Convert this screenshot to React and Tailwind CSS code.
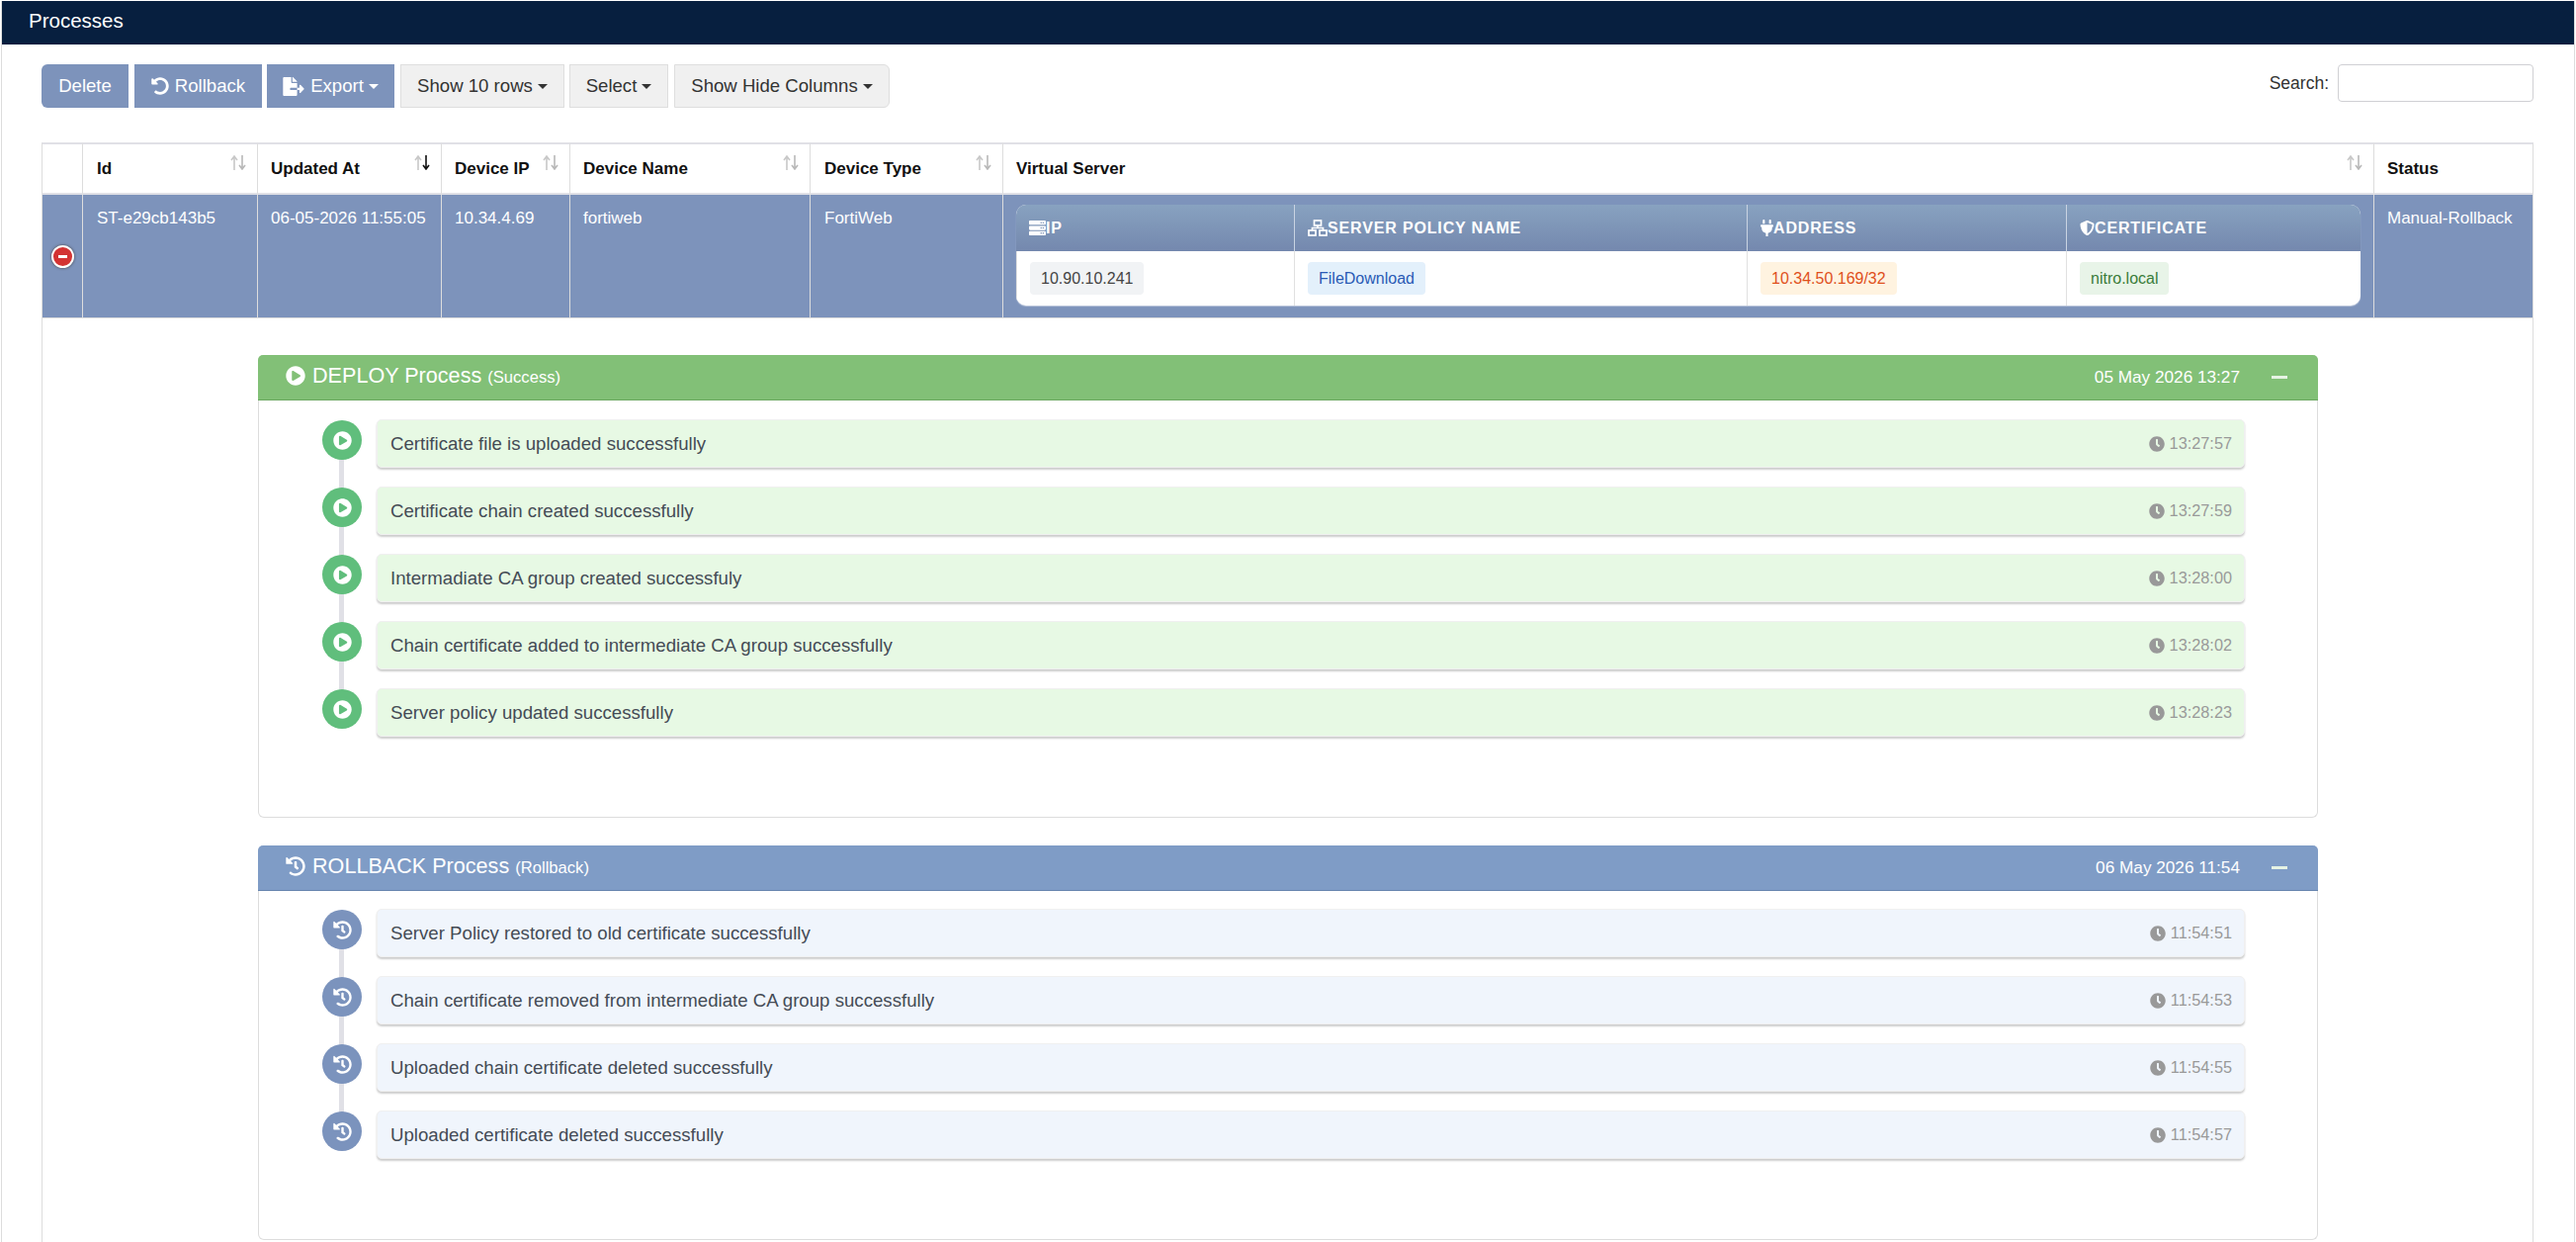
import React from "react";
import { FaUndoAlt, FaFileExport, FaServer, FaPlug, FaShieldAlt, FaPlayCircle, FaHistory, FaClock } from "react-icons/fa";

function Caret({ dark }) {
  return <span className={"ml-[5px] inline-block h-0 w-0 border-x-[5px] border-t-[5px] border-x-transparent " + (dark ? "border-t-[#333333]" : "border-t-white")} />;
}

function SortIcon({ active }) {
  return (
    <svg className="absolute right-[11px] top-[11px]" width="16" height="15" viewBox="0 0 16 15" fill="none" strokeWidth="1.6">
      <path d="M4 15V2M1 5l3-4 3 4" stroke="#c8c8c8" />
      <path d="M12 0v13M9 10l3 4 3-4" stroke={active ? "#111111" : "#b8b8b8"} />
    </svg>
  );
}

function NetIcon() {
  return (
    <svg width="20" height="17" viewBox="0 0 20 17" fill="none" stroke="white" strokeWidth="1.7" className="shrink-0">
      <rect x="6.5" y="1" width="7" height="5" />
      <rect x="1" y="11" width="7" height="5" />
      <rect x="12" y="11" width="7" height="5" />
      <path d="M10 6v2.5M4.5 11V8.5h11V11" />
    </svg>
  );
}

const cols = [
  { label: "", w: "w-[42px]", pad: "pl-[13px]" },
  { label: "Id", w: "w-[177px]", pad: "pl-[14px]" },
  { label: "Updated At", w: "w-[186px]", active: true, pad: "pl-[13px]" },
  { label: "Device IP", w: "w-[130px]", pad: "pl-[13px]" },
  { label: "Device Name", w: "w-[243px]", pad: "pl-[13px]" },
  { label: "Device Type", w: "w-[195px]", pad: "pl-[14px]" },
  { label: "Virtual Server", w: "w-[1387px]", pad: "pl-[13px]" },
  { label: "Status", w: "w-[161px]", nosort: true, pad: "pl-[13px]" },
];

const rowCells = [
  ["ST-e29cb143b5", "pl-[14px]"],
  ["06-05-2026 11:55:05", "pl-[13px]"],
  ["10.34.4.69", "pl-[13px]"],
  ["fortiweb", "pl-[13px]"],
  ["FortiWeb", "pl-[14px]"],
];

function Step({ text, time, last, green, Icon }) {
  return (
    <div className="relative flex items-start gap-[15px]">
      {!last && <div className={"absolute left-[17px] top-[40px] h-[30px] w-[5px] bg-[#e0e0e6]"} />}
      <div className={"relative mt-px flex h-[40px] w-[40px] shrink-0 items-center justify-center rounded-full text-white " + (green ? "bg-[#60be7c]" : "bg-[#7b93bd]")}>
        <Icon className="h-[19px] w-[19px]" />
      </div>
      <div className={"flex h-[49px] flex-1 items-center justify-between rounded-[5px] border border-[#f0f0f0] pl-[13px] pr-[12px] shadow-[0_2px_2px_rgba(0,0,0,0.2)] " + (green ? "bg-[#e7f9e4]" : "bg-[#f0f5fc]")}>
        <span className="text-[18.65px] text-[#444b55]">{text}</span>
        <span className="flex items-center gap-[5px] text-[16.3px] text-[#999999]">
          <FaClock className="h-[16px] w-[16px]" />
          {time}
        </span>
      </div>
    </div>
  );
}

function Card({ green, title, sub, date, steps, Icon, className, bodyTop }) {
  return (
    <section className={"rounded-[6px] border border-[#dddddd] border-t-0 " + className}>
      <header className={"-mx-px flex h-[46px] items-center justify-between rounded-t-[5px] border-b pl-[28px] pr-[31px] text-white " + (green ? "border-[#6ba861] bg-[#82c077]" : "border-[#6684ae] bg-[#7f9cc6]")}>
        <div className="-mt-[2px] flex items-center">
          <Icon className="mr-[7px] h-[20px] w-[20px]" />
          <span className="text-[21.6px]">{title}</span>
          <span className="ml-[6px] mt-[3px] text-[16.6px]">{sub}</span>
        </div>
        <div className="flex items-center">
          <span className="text-[17.2px]">{date}</span>
          <span className="ml-[32px] h-[3px] w-[16px] bg-[#e6f3e4]" />
        </div>
      </header>
      <div className={"flex flex-col gap-[19px] pb-[81px] pl-[64px] pr-[73px] " + bodyTop}>
        {steps.map((s, i) => (
          <Step key={s[0]} text={s[0]} time={s[1]} green={green} Icon={Icon} last={i === steps.length - 1} />
        ))}
      </div>
    </section>
  );
}

const deploy = [
  ["Certificate file is uploaded successfully", "13:27:57"],
  ["Certificate chain created successfully", "13:27:59"],
  ["Intermadiate CA group created successfuly", "13:28:00"],
  ["Chain certificate added to intermediate CA group successfully", "13:28:02"],
  ["Server policy updated successfully", "13:28:23"],
];
const rollback = [
  ["Server Policy restored to old certificate successfully", "11:54:51"],
  ["Chain certificate removed from intermediate CA group successfully", "11:54:53"],
  ["Uploaded chain certificate deleted successfully", "11:54:55"],
  ["Uploaded certificate deleted successfully", "11:54:57"],
];

const btnBlue = "flex h-[44px] items-center justify-center bg-[#7d93bb] text-white";
const btnGray = "flex h-[44px] items-center justify-center border border-[#dedede] bg-[#f0f0f0] text-[#333333]";

const innerHead = "flex h-[47px] items-center border-l border-[#c9d3e2] bg-gradient-to-b from-[#88a2c0] to-[#7488ae] pl-[13px] text-[16px] font-bold tracking-[0.85px] text-white first:border-l-0";
const innerBody = "flex h-[55px] items-center border-l border-[#e0e0e0] pl-[13px] first:border-l-0";
const badge = "flex h-[33px] items-center rounded-[4px] px-[11px] text-[16px]";

export default function App() {
  return (
    <div className="h-screen overflow-hidden bg-white font-['Liberation_Sans',Arial,sans-serif]">
      <div className="ml-px mr-px mt-px h-full border-x border-[#dddddd]">
        <div className="flex h-[44px] items-center bg-[#071f3f] pb-[3px] pl-[27px] text-[20.5px] text-white">Processes</div>

        <div className="flex justify-between pl-[40px] pr-[41px] pt-[20px]">
          <div className="flex text-[18.6px]">
            <button className={btnBlue + " w-[88px] rounded-l-[6px]"}>Delete</button>
            <button className={btnBlue + " ml-[6px] w-[129px]"}><FaUndoAlt className="mr-[6px] h-[18px] w-[18px]" />Rollback</button>
            <button className={btnBlue + " ml-[5px] w-[129px]"}><FaFileExport className="mr-[6px] h-[19px] w-[22px]" />Export<Caret /></button>
            <button className={btnGray + " ml-[6px] w-[166px]"}>Show 10 rows<Caret dark /></button>
            <button className={btnGray + " ml-[5px] w-[100px]"}>Select<Caret dark /></button>
            <button className={btnGray + " ml-[6px] w-[218px] rounded-r-[6px]"}>Show Hide Columns<Caret dark /></button>
          </div>
          <label className="flex h-[38px] items-center text-[17.5px] text-[#333333]">
            Search:
            <input className="ml-[9px] h-[38px] w-[198px] rounded-[4px] border border-[#d0d0d4] bg-white" />
          </label>
        </div>

        <table className="ml-[40px] mt-[35px] w-[2521px] table-fixed border-separate border-spacing-0 text-[17px]">
          <colgroup>
            {cols.map((c, i) => <col key={i} className={c.w} />)}
          </colgroup>
          <thead>
            <tr>
              {cols.map((c, i) => (
                <th key={i} className={"relative h-[53px] border-b-2 border-r border-t-2 border-b-[#e0e0e6] border-r-[#dddddd] border-t-[#e0e0e6] text-left align-middle font-bold text-[#111111] " + c.pad + (i === 0 ? " border-l border-l-[#dddddd]" : "")}>
                  {c.label}
                  {c.label && !c.nosort && <SortIcon active={c.active} />}
                </th>
              ))}
            </tr>
          </thead>
          <tbody>
            <tr className="text-white">
              <td className="h-[125px] border-b border-l border-r border-[#dddddd] bg-[#7d93bb] align-middle">
                <div className="mx-auto flex h-[23px] w-[23px] items-center justify-center rounded-full border-2 border-white bg-[#d33333] shadow-[0_0_3px_#444444]">
                  <span className="h-[3px] w-[9px] bg-white" />
                </div>
              </td>
              {rowCells.map(([t, pad]) => (
                <td key={t} className={"whitespace-nowrap border-b border-r border-[#dddddd] bg-[#7d93bb] pt-[11px] align-top leading-[26px] " + pad}>{t}</td>
              ))}
              <td className="border-b border-r border-[#dddddd] bg-[#7d93bb] px-[13px] pb-[11px] pt-[10px] align-top">
                <div className="grid grid-cols-[281px_458px_323px_298px] overflow-hidden rounded-[10px] bg-white shadow-[0_1px_1px_rgba(255,255,255,0.5)]">
                  <div className={innerHead}><FaServer className="h-[17px] w-[17px]" />IP</div>
                  <div className={innerHead}><NetIcon />SERVER POLICY NAME</div>
                  <div className={innerHead}><FaPlug className="h-[17px] w-[13px]" />ADDRESS</div>
                  <div className={innerHead}><FaShieldAlt className="h-[17px] w-[15px]" />CERTIFICATE</div>
                  <div className={innerBody}><span className={badge + " bg-[#f1f3f5] text-[#444444]"}>10.90.10.241</span></div>
                  <div className={innerBody}><span className={badge + " bg-[#e3f0fb] text-[#2a5bb5]"}>FileDownload</span></div>
                  <div className={innerBody}><span className={badge + " bg-[#fff3e0] text-[#e0501c]"}>10.34.50.169/32</span></div>
                  <div className={innerBody}><span className={badge + " bg-[#e8f4e8] text-[#3a7d3a]"}>nitro.local</span></div>
                </div>
              </td>
              <td className="whitespace-nowrap border-b border-r border-[#dddddd] bg-[#7d93bb] pl-[13px] pt-[11px] align-top leading-[26px]">Manual-Rollback</td>
            </tr>
            <tr>
              <td colSpan={8} className="border-x border-[#dddddd] pb-[20px] pl-[218px] pr-[217px] pt-[37px]">
                <Card green title="DEPLOY Process" sub="(Success)" date="05 May 2026 13:27" steps={deploy} Icon={FaPlayCircle} bodyTop="pt-[19px]" />
                <Card className="mt-[28px]" title="ROLLBACK Process" sub="(Rollback)" date="06 May 2026 11:54" steps={rollback} Icon={FaHistory} bodyTop="pt-[18px]" />
              </td>
            </tr>
          </tbody>
        </table>
      </div>
    </div>
  );
}
